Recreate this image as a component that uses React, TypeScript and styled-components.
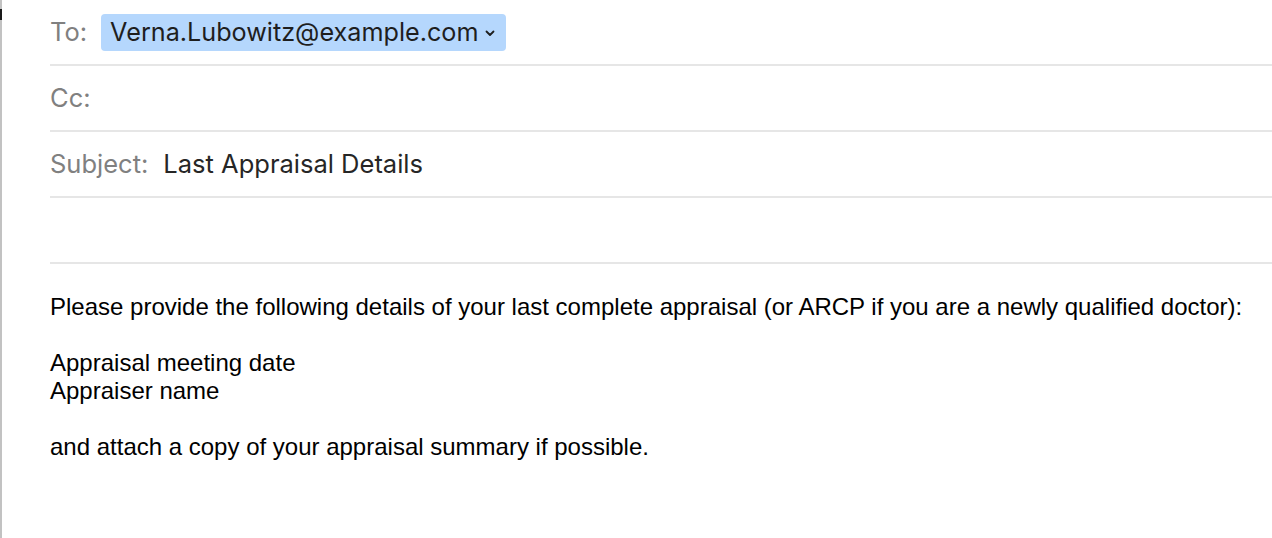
import React from "react";
import styled, { createGlobalStyle } from "styled-components";

const Global = createGlobalStyle`
  html, body { margin: 0; padding: 0; background: #ffffff; }
  body { width: 1272px; height: 538px; overflow: hidden; }
`;

const Window = styled.div`
  position: relative;
  width: 1272px;
  height: 538px;
  box-sizing: border-box;
  border-left: 2px solid #c2c2c2;
  background: #ffffff;
`;

const EdgeMark = styled.div`
  position: absolute;
  left: -2px;
  top: 9px;
  width: 2px;
  height: 11px;
  background: #1a1a1a;
`;

const Header = styled.div`
  display: flex;
  flex-direction: column;
  padding-left: 48px;
`;

const Row = styled.div`
  display: flex;
  align-items: center;
  box-sizing: border-box;
  height: 66px;
  padding-bottom: 2px;
  border-bottom: 2px solid #e6e6e6;
  font-family: Inter, "Liberation Sans", sans-serif;
  font-size: 25.5px;
`;

const Label = styled.span<{ $gap: number }>`
  color: #808080;
  margin-right: ${(p) => p.$gap}px;
`;

const Value = styled.span`
  color: #262626;
`;

const Pill = styled.span`
  display: inline-flex;
  align-items: center;
  height: 37px;
  margin-top: 2px;
  padding: 0 11px 0 9px;
  background: #b5d7fd;
  border-radius: 4px;
  color: #1e1e1e;
  font-size: 25.2px;
  gap: 6px;
`;

const Chevron = styled.svg`
  width: 10px;
  height: 7px;
  margin-top: 2px;
`;

const Body = styled.div`
  padding: 29px 0 0 48px;
  font-family: "Liberation Sans", Arial, sans-serif;
  font-size: 24px;
  line-height: 28px;
  color: #000000;
`;

const Line = styled.div`
  min-height: 28px;
  white-space: pre;
`;

export default function App() {
  return (
    <>
      <Global />
      <Window>
        <EdgeMark />
        <Header>
          <Row>
            <Label $gap={14}>To:</Label>
            <Pill>
              Verna.Lubowitz@example.com
              <Chevron viewBox="0 0 10 7">
                <path
                  d="M1.5 1.5 L5 5 L8.5 1.5"
                  fill="none"
                  stroke="#1e1e1e"
                  strokeWidth="1.8"
                  strokeLinecap="round"
                  strokeLinejoin="round"
                />
              </Chevron>
            </Pill>
          </Row>
          <Row>
            <Label $gap={12}>Cc:</Label>
          </Row>
          <Row>
            <Label $gap={15}>Subject:</Label>
            <Value>Last Appraisal Details</Value>
          </Row>
          <Row />
        </Header>
        <Body>
          <Line>
            Please provide the following details of your last complete appraisal (or ARCP if you are a newly qualified doctor):
          </Line>
          <Line> </Line>
          <Line>Appraisal meeting date</Line>
          <Line>Appraiser name</Line>
          <Line> </Line>
          <Line>and attach a copy of your appraisal summary if possible.</Line>
        </Body>
      </Window>
    </>
  );
}
